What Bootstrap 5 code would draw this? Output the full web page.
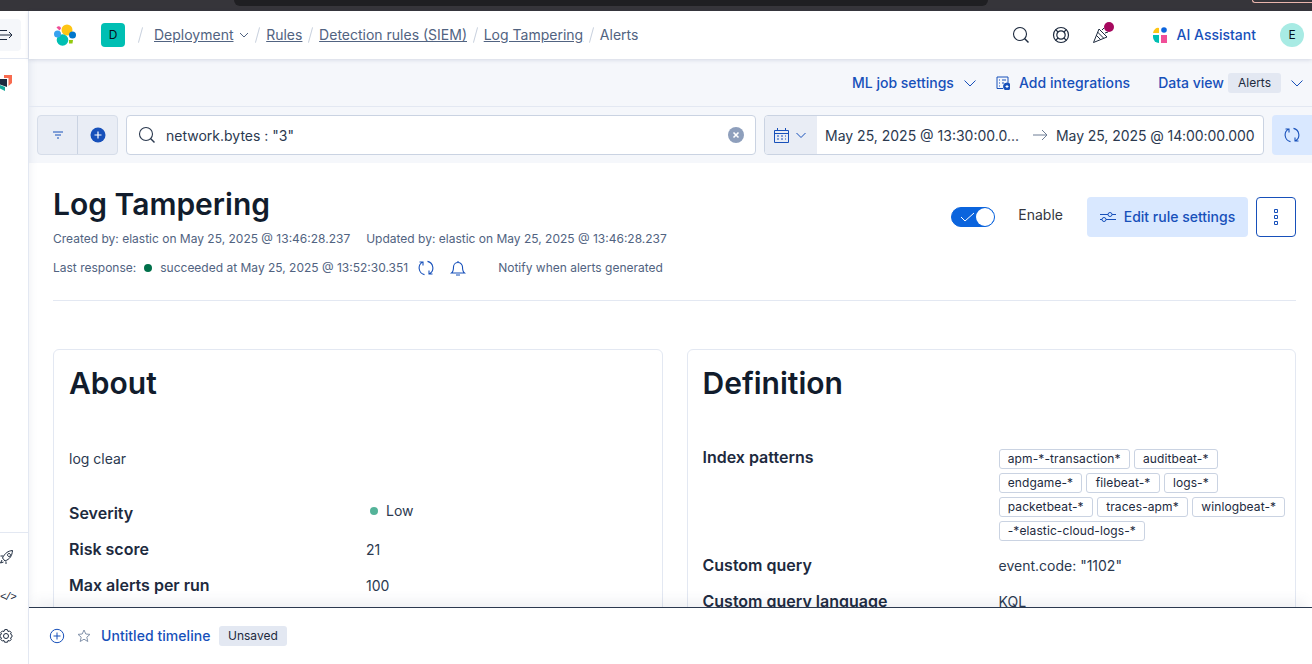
<!DOCTYPE html>
<html lang="en">
<head>
<meta charset="utf-8">
<title>Log Tampering</title>
<link href="https://cdn.jsdelivr.net/npm/bootstrap@5.3.0/dist/css/bootstrap.min.css" rel="stylesheet">
<style>
html,body{height:664px;overflow:hidden;margin:0}
body{font-family:Inter,"Liberation Sans",sans-serif;font-size:14px;color:#343741;background:#fff;line-height:20px}
svg{display:block;flex:none}
.chrome{height:11px;background:#36353a;flex:none;padding-left:234px}
.chrome-tab{height:6px;width:754px;background:#1f1f22;border-radius:0 0 8px 8px}
.chrome-pink{height:3px;width:60px;margin-left:264px;border:1px solid #e9b5ac;border-top:0;border-right:0;border-radius:0 0 0 5px}
.shell{height:653px}
.rail{width:29px;flex:none;border-right:1px solid #e3e8f2;overflow:hidden}
.rail-top{height:48px;border-bottom:1px solid #e3e8f2;padding-top:8px}
.rail-collapse{width:21px;height:32px;background:#f5f7fa;border-radius:0 4px 4px 0;padding:9px 0 0 0}
.rail-logo{padding-top:16px}
.rail-bottom{height:132px;border-top:1px solid #e3e8f2;padding:16px 0 0 0;gap:22px}
.rail-code{font:11px/16px "Liberation Mono",monospace;color:#1d2a3e;letter-spacing:-1.5px;margin-top:2px}
.main-col{min-width:0}
.head{height:48px;padding:0 8px 0 24px;flex:none;box-shadow:0 1px 4px rgba(60,80,120,.18);position:relative;z-index:2;background:#fff}
.deploy-box{width:24px;height:24px;background:#00bfb3;border-radius:4px;color:#07101f;font-size:12px;margin-left:24px}
.crumb{color:#516381;text-decoration:underline}
.crumb-now{color:#516381}
.sep{width:1px;height:16px;background:#c9d1de;transform:rotate(15deg);margin:0 7.85px}
.sep-first{margin-left:15px;margin-right:13px}
.ai-link{color:#1750ba;font-weight:500}
.avatar{width:24px;height:24px;background:#a8ebe4;border-radius:50%;color:#07101f;font-size:12px;margin-left:24px}
.sub{height:48px;background:#f5f7fb;border-bottom:1px solid #e3e8f2;flex:none;padding-right:8px;color:#1750ba;font-weight:500;box-shadow:inset 8px 0 8px -8px rgba(60,80,120,.12)}
.sub-wide{letter-spacing:.06px}
.pill{background:#e3e8f2;color:#1d2a3e;font-size:12px;font-weight:400;border-radius:3px;padding:0 10px;line-height:20px;height:20px}
.qbar{height:56px;background:#f5f7fb;flex:none;padding:8px 0 8px 8px;gap:8px;box-shadow:inset 8px 0 8px -8px rgba(60,80,120,.12)}
.fbtns{width:81px;height:40px;background:#e9edf5;border:1px solid #d6dde9;border-radius:4px}
.fbtn-a{flex:0 0 39px}
.fbtn-b{flex:1;border-left:1px solid #cad3e2}
.qtext{padding-top:2px;white-space:nowrap}
.qtext-tight{letter-spacing:-.07px}
.sbox{height:40px;width:630px;background:#fff;border:1px solid #cad3e2;border-radius:4px;padding:0 11px;color:#2b394f}
.dbox{height:40px;width:500px;background:#fff;border:1px solid #cad3e2;border-radius:4px;color:#2b394f;overflow:hidden}
.dcal{width:52px;height:100%;background:#e9edf5;gap:6px;padding-left:9px}
.refresh{width:40px;height:40px;background:#d9e8ff;border-radius:4px 0 0 4px}
.scroller{min-height:0;padding:0 16px 0 24px;overflow:hidden;box-shadow:inset 8px 0 8px -8px rgba(60,80,120,.1)}
.ttl{font-size:30px;font-weight:600;color:#111c2c;line-height:36px;margin:0;padding-top:23px}
.meta{font-size:12px;color:#516381;line-height:16px}
.dot{width:8px;height:8px;border-radius:50%;background:#00704a}
.tog{width:44px;height:20px;background:#0b64dd;border-radius:10px;border:1px solid #0b64dd;padding-left:8px}
.knob{width:18px;height:18px;border-radius:50%;background:#fff;margin-left:auto}
.btn-edit{height:40px;width:161px;background:#d9e8ff;color:#1750ba;font-weight:500;border-radius:4px;gap:8px}
.btn-more{height:40px;width:40px;border:1px solid #1750ba;border-radius:4px;margin-left:8px}
.rule{border-top:1px solid #e3e8f2;margin-top:24px}
.panes{margin-top:48px;gap:24px}
.pane{flex:1 1 0;min-width:0;border:1px solid #e3e8f2;border-radius:6px;padding:15px 15px;height:300px}
.pane-ttl{font-size:30px;font-weight:600;color:#111c2c;line-height:36px;margin:0}
.lbl{font-size:16px;font-weight:600;color:#1d2a3e;line-height:20px}
.val{color:#2b394f;padding-top:1px;white-space:nowrap}
.plain-val{color:#2b394f}
.about-lbl{width:297px;flex:none}
.def-lbl{width:296px;flex:none}
.tagset{gap:4px;width:290px}
.tagrow{gap:4px}
.tg{font-size:12px;line-height:18px;height:20px;border:1px solid #cad3e2;border-radius:3px;padding:0 8.25px;color:#1d2a3e;white-space:nowrap;letter-spacing:.1px}
.sev{width:8px;height:8px;border-radius:50%;background:#54b399;margin:0 8px 0 4px}
.tl{height:57px;flex:none;border-top:1px solid #2b394f;background:#fff;padding-left:20px;position:relative;box-shadow:0 -12px 12px -6px rgba(60,80,120,.08)}
.tl-link{color:#1750ba;font-weight:500;letter-spacing:.05px}
.pill-b{background:#e3e8f2;color:#1d2a3e;font-size:12px;border-radius:3px;padding:0 9.5px;line-height:20px;height:20px;margin-left:8px}
</style>
</head>
<body>
<div class="chrome d-flex"><div class="chrome-tab"></div><div class="chrome-pink"></div></div>
<div class="shell d-flex">
  <aside class="rail d-flex flex-column">
    <div class="rail-top"><div class="rail-collapse">
      <svg width="14" height="14" viewBox="0 0 14 14" fill="none" stroke="#1d2a3e" stroke-width="1"><path d="M0 2.500h7M0 7h12M0 11.500h7M9 4l3 3-3 3"/></svg>
    </div></div>
    <div class="rail-logo"><svg width="12" height="16" viewBox="0 0 12 16"><path d="M4 0h8v8l-3.500 3V3H4z" fill="#f86b4f"/><path d="M0 4h7v8l-7-2.500z" fill="#1d2a3e"/><path d="M0 10l5 2v4l-5-2.500z" fill="#14a89a"/></svg></div>
    <div class="flex-grow-1"></div>
    <div class="rail-bottom d-flex flex-column">
      <svg width="14" height="16" viewBox="0 0 14 16" fill="none" stroke="#1d2a3e"><path d="M12.500 1.500C8 2 5 4 2.500 9l2.500 3c5-2 7-5 7.500-10.500zM3 7H0.500M6 12.500V15M9 4.500a1.500 1.500 0 1 0 .01 0M2 11l-1.500 3 3-1"/></svg>
      <div class="d-flex"><span class="rail-code">&lt;/&gt;</span></div>
      <svg style="margin-top:1px" width="14" height="16" viewBox="0 0 14 16" fill="none" stroke="#1d2a3e"><circle cx="6" cy="8" r="2.500"/><path d="M6 1.500l1.500.3.5 1.700 1.700-.5 1.500 1.500-.7 1.600 1.500 1-.0 1.800-1.500 1 .7 1.600-1.500 1.500-1.700-.5-.5 1.700H4.500l-.5-1.700-1.700.5L.8 11.500l.7-1.600L0 8.900V7.100l1.500-1-.7-1.600L2.300 3l1.700.5.5-1.700z"/></svg>
    </div>
  </aside>
  <div class="main-col d-flex flex-column flex-grow-1">
    <header class="head d-flex align-items-center">
      <svg width="24" height="24" viewBox="0 0 24 24"><circle cx="14" cy="7" r="5.500" fill="#fec514"/><circle cx="9.500" cy="17" r="5.800" fill="#00bfb3"/><path d="M3.500 4.500a2.500 2.500 0 0 1 4-.5l.5 1.500-1.500 2z" fill="#f04e98"/><circle cx="4.500" cy="11" r="3.500" fill="#36a2ef"/><circle cx="19.500" cy="12" r="3.500" fill="#0077cc"/><path d="M16 17h4l-.5 3.500H16z" fill="#93c90e"/></svg>
      <div class="deploy-box d-flex align-items-center justify-content-center">D</div>
      <span class="sep sep-first"></span>
      <span class="crumb">Deployment</span>
      <svg class="ms-1" width="12" height="12" viewBox="0 0 12 12" fill="none" stroke="#516381"><path d="M2 4l4 4 4-4"/></svg>
      <span class="sep"></span><span class="crumb">Rules</span>
      <span class="sep"></span><span class="crumb">Detection rules (SIEM)</span>
      <span class="sep"></span><span class="crumb">Log Tampering</span>
      <span class="sep"></span><span class="crumb-now">Alerts</span>
      <div class="ms-auto d-flex align-items-center">
        <svg width="18" height="18" viewBox="0 0 18 18" fill="none" stroke="#1d2a3e" stroke-width="1.100"><circle cx="8" cy="8" r="6.500"/><path d="M12.500 12.500l4 4" stroke-width="1.500"/></svg>
        <svg style="margin-left:22px" width="18" height="18" viewBox="0 0 18 18" fill="none" stroke="#1d2a3e" stroke-width="1.200"><circle cx="9" cy="9" r="7.500"/><circle cx="9" cy="9" r="4.200"/><path d="M3.700 3.700l2.300 2.300M14.300 3.700L12 6M3.700 14.300L6 12M14.300 14.300L12 12"/></svg>
        <div class="position-relative" style="margin-left:22px;width:18px;height:18px">
          <svg width="18" height="18" viewBox="0 0 18 18" fill="none" stroke="#1d2a3e"><path d="M7 3L1.500 16.500 15 11zM4 9l5 5M5.500 6l6 6M10 4l2-2M13 7l3-1"/></svg>
          <span class="position-absolute" style="left:12px;top:-4px;width:10px;height:10px;border-radius:50%;background:#a6085e"></span>
        </div>
        <svg style="margin-left:43px" width="16" height="16" viewBox="0 0 16 16"><path d="M0 6a5 6 0 0 1 6-5v5z" fill="#fec514"/><path d="M0 8h6v8a6 6 0 0 1-6-6z" fill="#00bfb3"/><circle cx="11" cy="3" r="2.800" fill="#0b64dd"/><path d="M8 8h6v8H8z" fill="#f04e98"/></svg>
        <span class="ai-link ms-2">AI Assistant</span>
        <div class="avatar d-flex align-items-center justify-content-center">E</div>
      </div>
    </header>
    <div class="sub d-flex align-items-center justify-content-end">
      <span>ML job settings</span>
      <svg style="margin-left:9px" width="14" height="14" viewBox="0 0 14 14" fill="none" stroke="#1750ba"><path d="M1.500 4.500L7 10l5.500-5.500"/></svg>
      <svg style="margin-left:19px" width="14" height="14" viewBox="0 0 14 14" fill="none" stroke="#1750ba"><path d="M7 12.500H1V1h11v6M3 4h1M6 4h4M3 7h1M6 7h2M3 10h1"/><circle cx="11" cy="10.500" r="3.500" fill="#1750ba"/><path d="M9.500 10.500h3M11 9v3" stroke="#fff"/></svg>
      <span class="sub-wide" style="margin-left:9px">Add integrations</span>
      <span style="margin-left:28px">Data view</span>
      <span class="pill ms-1">Alerts</span>
      <svg style="margin-left:9px" width="14" height="14" viewBox="0 0 14 14" fill="none" stroke="#1750ba"><path d="M1.500 4.500L7 10l5.500-5.500"/></svg>
    </div>
    <div class="qbar d-flex align-items-center">
      <div class="fbtns d-flex">
        <div class="fbtn-a d-flex align-items-center justify-content-center"><svg width="12" height="12" viewBox="0 0 12 12" fill="none" stroke="#1750ba"><path d="M1 3h10M3 6h6M5 9h2"/></svg></div>
        <div class="fbtn-b d-flex align-items-center justify-content-center"><svg width="16" height="16" viewBox="0 0 16 16"><circle cx="8" cy="8" r="7.500" fill="#1750ba"/><path d="M4.500 8h7M8 4.500v7" stroke="#fff" stroke-width="1.200"/></svg></div>
      </div>
      <div class="sbox d-flex align-items-center">
        <svg width="18" height="18" viewBox="0 0 18 18" fill="none" stroke="#2b394f" stroke-width="1.100"><circle cx="8" cy="8" r="6.500"/><path d="M12.500 12.500l4 4" stroke-width="1.500"/></svg>
        <span class="qtext" style="margin-left:10px">network.bytes : "3"</span>
        <svg class="ms-auto" width="16" height="16" viewBox="0 0 16 16"><circle cx="8" cy="8" r="8" fill="#8e9fbc"/><path d="M5.500 5.500l5 5M10.500 5.500l-5 5" stroke="#fff" stroke-width="1.600"/></svg>
      </div>
      <div class="dbox d-flex align-items-center">
        <div class="dcal d-flex align-items-center">
          <svg width="15" height="15" viewBox="0 0 15 15" fill="none" stroke="#1750ba"><path d="M.5 2.500h14v12H.5zM.5 5.500h14M3.500 0v3M11.500 0v3M3 8h2M7 8h2M11 8h1M3 11h2M7 11h2M11 11h1"/></svg>
          <svg width="12" height="12" viewBox="0 0 12 12" fill="none" stroke="#1750ba"><path d="M1.500 4L6 8.500 10.500 4"/></svg>
        </div>
        <span class="qtext" style="margin-left:8px;width:198px">May 25, 2025 @ 13:30:00.0...</span>
        <svg style="margin-left:9px" width="16" height="12" viewBox="0 0 16 12" fill="none" stroke="#6d7d95"><path d="M1 6h14M10 1l5 5-5 5"/></svg>
        <span class="qtext qtext-tight" style="margin-left:8px">May 25, 2025 @ 14:00:00.000</span>
      </div>
      <div class="refresh d-flex align-items-center justify-content-center"><svg width="16" height="16" viewBox="0 0 16 16" fill="none" stroke="#1750ba" stroke-width="1.100"><path d="M6.500 14.600A6.800 6.800 0 0 1 4.500 2.100M1.500 2h3.500v3.500M9.500 1.400A6.800 6.800 0 0 1 11.500 13.900M14.500 14H11v-3.500"/></svg></div>
    </div>
    <div class="scroller flex-grow-1 d-flex flex-column">
      <div class="d-flex justify-content-between">
        <div>
          <h1 class="ttl">Log Tampering</h1>
          <div class="meta d-flex" style="margin-top:9px"><span>Created by: elastic on May 25, 2025 @ 13:46:28.237</span><span style="margin-left:16px">Updated by: elastic on May 25, 2025 @ 13:46:28.237</span></div>
          <div class="meta d-flex align-items-center" style="margin-top:13px">
            <span>Last response:</span><span class="dot" style="margin:0 8px"></span><span>succeeded at May 25, 2025 @ 13:52:30.351</span>
            <svg style="margin-left:10px" width="16" height="16" viewBox="0 0 16 16" fill="none" stroke="#1750ba" stroke-width="1.100"><path d="M6.500 14.600A6.800 6.800 0 0 1 4.500 2.100M1.500 2h3.500v3.500M9.500 1.400A6.800 6.800 0 0 1 11.500 13.900M14.500 14H11v-3.500"/></svg>
            <svg style="margin-left:16px" width="16" height="16" viewBox="0 0 16 16" fill="none" stroke="#1750ba" stroke-width="1.100"><path d="M1.500 13h13c-2-1.500-2-3-2-6a4.500 4.500 0 0 0-9 0c0 3 0 4.500-2 6zM6 15h4M8 1v1.500"/></svg>
            <span style="margin-left:32px">Notify when alerts generated</span>
          </div>
        </div>
        <div class="d-flex align-items-start" style="padding-top:34px">
          <div class="d-flex align-items-center" style="height:40px">
            <div class="tog d-flex align-items-center"><svg width="16" height="12" viewBox="0 0 16 12" fill="none" stroke="#fff"><path d="M1 6l4 4 9-8"/></svg><span class="knob"></span></div>
            <span style="margin-left:23px;margin-right:24px;position:relative;top:-2px">Enable</span>
          </div>
          <div class="btn-edit d-flex align-items-center justify-content-center">
            <svg width="16" height="12" viewBox="0 0 16 12" fill="none" stroke="#1750ba"><path d="M0 3.500h8M12 3.500h4M0 8.500h2M6 8.500h10"/><circle cx="10" cy="3.500" r="2"/><circle cx="4" cy="8.500" r="2"/></svg>
            <span>Edit rule settings</span>
          </div>
          <div class="btn-more d-flex align-items-center justify-content-center"><svg width="4" height="16" viewBox="0 0 4 16" fill="none" stroke="#1750ba"><path d="M.5 .5h3v3h-3zM.5 6.500h3v3h-3zM.5 12.500h3v3h-3z"/></svg></div>
        </div>
      </div>
      <div class="rule"></div>
      <div class="panes d-flex">
        <section class="pane">
          <h2 class="pane-ttl">About</h2>
          <div class="plain-val" style="margin-top:48px">log clear</div>
          <div class="d-flex align-items-start" style="margin-top:34px"><span class="lbl about-lbl">Severity</span><span class="d-flex align-items-center val" style="margin-top:-3px"><span class="sev"></span>Low</span></div>
          <div class="d-flex align-items-start" style="margin-top:16px"><span class="lbl about-lbl">Risk score</span><span class="val">21</span></div>
          <div class="d-flex align-items-start" style="margin-top:15px"><span class="lbl about-lbl">Max alerts per run</span><span class="val">100</span></div>
        </section>
        <section class="pane">
          <h2 class="pane-ttl">Definition</h2>
          <div class="d-flex" style="margin-top:46px">
            <span class="lbl def-lbl">Index patterns</span>
            <div class="tagset d-flex flex-column" style="margin-top:2px">
              <div class="tagrow d-flex"><span class="tg">apm-*-transaction*</span><span class="tg">auditbeat-*</span></div>
              <div class="tagrow d-flex"><span class="tg">endgame-*</span><span class="tg">filebeat-*</span><span class="tg">logs-*</span></div>
              <div class="tagrow d-flex"><span class="tg">packetbeat-*</span><span class="tg">traces-apm*</span><span class="tg">winlogbeat-*</span></div>
              <div class="tagrow d-flex"><span class="tg">-*elastic-cloud-logs-*</span></div>
            </div>
          </div>
          <div class="d-flex align-items-start" style="margin-top:14px"><span class="lbl def-lbl">Custom query</span><span class="val">event.code: "1102"</span></div>
          <div class="d-flex align-items-start" style="margin-top:15px"><span class="lbl def-lbl">Custom query language</span><span class="val">KQL</span></div>
        </section>
      </div>
    </div>
    <footer class="tl d-flex align-items-center">
      <svg width="16" height="16" viewBox="0 0 16 16" fill="none" stroke="#1750ba"><circle cx="8" cy="8" r="6.700"/><path d="M4.500 8h7M8 4.500v7"/></svg>
      <svg style="margin-left:12px" width="14" height="14" viewBox="0 0 14 14" fill="none" stroke="#8393ab"><path d="M7 1l1.800 4 4.200.4-3.200 2.800 1 4.300L7 10.200 3.200 12.500l1-4.300L1 5.400 5.200 5z"/></svg>
      <span class="tl-link" style="margin-left:10px">Untitled timeline</span>
      <span class="pill-b">Unsaved</span>
    </footer>
  </div>
</div>
<script src="https://cdn.jsdelivr.net/npm/bootstrap@5.3.0/dist/js/bootstrap.bundle.min.js"></script>
</body>
</html>
